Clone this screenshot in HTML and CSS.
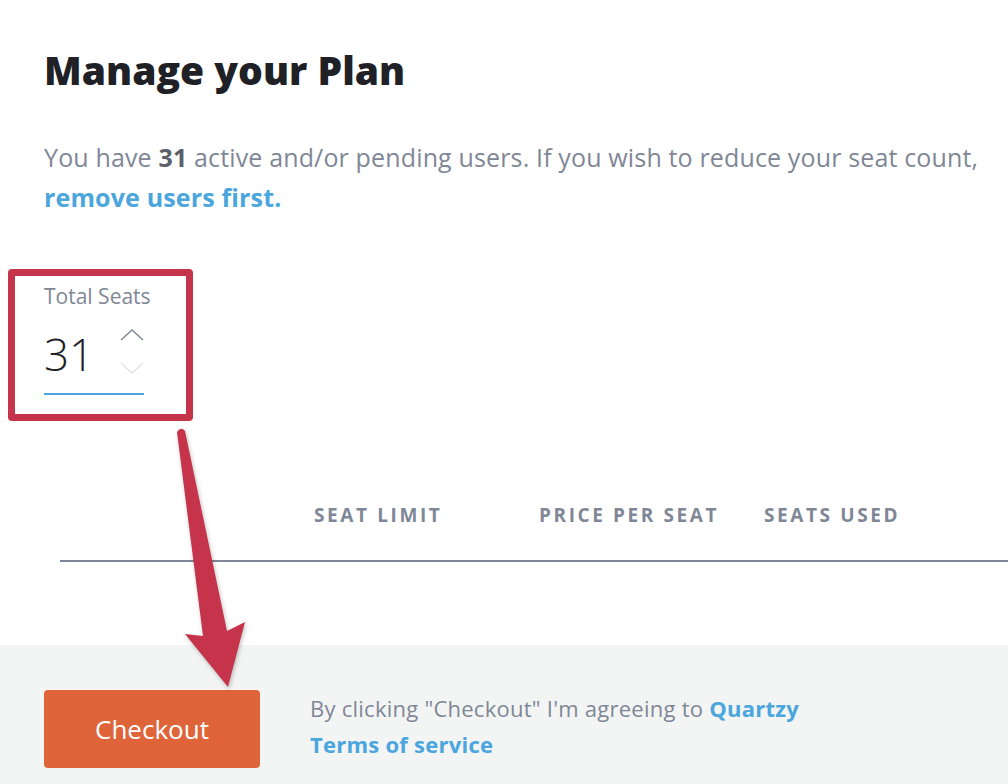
FILE: index.html
```html
<!DOCTYPE html>
<html lang="en">
<head>
    <meta charset="UTF-8">
    <meta name="viewport" content="width=device-width, initial-scale=1.0">
    <title>Manage your Plan</title>
    <link rel="stylesheet" href="styles.css">
</head>
<body>
    <main class="page">
        <section class="plan">
            <h1 class="plan-title">Manage your Plan</h1>
            <p class="plan-info">
                You have <strong>31</strong> active and/or pending users. If you wish to reduce your seat count,
                <a href="#" class="link">remove users first.</a>
            </p>

            <div class="seats">
                <label for="seats" class="seats-label">Total Seats</label>
                <div class="seats-input">
                    <span id="seats" class="seats-value">31</span>
                    <div class="seats-spinner">
                        <svg width="24" height="12" viewBox="0 0 24 12"><path d="M1 11 L12 1 L23 11" fill="none" stroke="#7f8796" stroke-width="1.4"/></svg>
                        <svg width="24" height="12" viewBox="0 0 24 12"><path d="M1 1 L12 11 L23 1" fill="none" stroke="#dfe2e6" stroke-width="1.4"/></svg>
                    </div>
                </div>
                <div class="highlight"></div>
            </div>

            <div class="plan-table">
                <span></span>
                <span class="col-head">Seat limit</span>
                <span class="col-head">Price per seat</span>
                <span class="col-head">Seats used</span>
            </div>
        </section>

        <footer class="checkout">
            <button class="checkout-btn">Checkout</button>
            <p class="terms">
                By clicking "Checkout" I'm agreeing to <a href="#" class="link">Quartzy Terms of service</a>
            </p>
        </footer>

        <!-- annotation arrow -->
        <svg class="arrow" width="1008" height="784" viewBox="0 0 1008 784">
            <path d="M177 432 Q181 426 185 431 L227 631 L245 622 L228 687 L185 634 L203 636 Z" fill="#c5344a"/>
        </svg>
    </main>
</body>
</html>
```

FILE: styles.css
```css
* {
    margin: 0;
    padding: 0;
    box-sizing: border-box;
    font-family: "Open Sans", "Lato", sans-serif;
}

:root {
    --text-dark: #1f2127;
    --text-grey: #7f8796;
    --link: #4aa6dc;
    --annot: #c5344a;
    --orange: #e0643a;
    --footer-bg: #f3f4f4;
}

body {
    background-color: #fff;
    width: 1008px;
    height: 784px;
    overflow: hidden;
}

.page {
    position: relative;
    height: 784px;
    display: flex;
    flex-direction: column;
}

.plan {
    padding: 45px 0 0 44px;
    flex: 1;
}

.plan-title {
    font-size: 39px;
    font-weight: 800;
    line-height: 50px;
    color: var(--text-dark);
}

.plan-info {
    max-width: 950px;
    margin-top: 42px;
    font-size: 25px;
    line-height: 40px;
    letter-spacing: 0.15px;
    color: var(--text-grey);
}

.plan-info strong {
    color: #5b606b;
}

.link {
    color: var(--link);
    font-weight: 700;
    text-decoration: none;
}

.seats {
    position: relative;
    margin-top: 66px;
    width: 100px;
}

.seats-label {
    display: block;
    white-space: nowrap;
    font-size: 21px;
    line-height: 26px;
    color: var(--text-grey);
}

.seats-input {
    display: flex;
    align-items: center;
    justify-content: space-between;
    height: 86px;
    border-bottom: 2px solid var(--link);
}

.seats-value {
    margin-top: 6px;
    font-size: 44px;
    font-weight: 300;
    line-height: 44px;
    color: var(--text-dark);
}

.seats-spinner {
    display: flex;
    flex-direction: column;
    gap: 21px;
}

.highlight {
    position: absolute;
    left: -36px;
    top: -14px;
    width: 185px;
    height: 152px;
    border: 7px solid var(--annot);
    border-radius: 4px;
}

.plan-table {
    display: grid;
    grid-template-columns: 254px 225px 225px 1fr;
    margin: 108px 0 0 16px;
    padding-bottom: 33px;
    border-bottom: 2px solid var(--text-grey);
}

.col-head {
    font-size: 19px;
    font-weight: 700;
    line-height: 24px;
    letter-spacing: 2.6px;
    text-transform: uppercase;
    color: var(--text-grey);
}

.checkout {
    display: flex;
    align-items: flex-start;
    gap: 50px;
    height: 139px;
    padding: 45px 0 0 44px;
    background-color: var(--footer-bg);
}

.checkout-btn {
    width: 216px;
    height: 78px;
    border: none;
    border-radius: 4px;
    background-color: var(--orange);
    color: #fff;
    font-size: 26px;
    cursor: pointer;
}

.terms {
    width: 510px;
    font-size: 22px;
    line-height: 36px;
    letter-spacing: 0.25px;
    color: var(--text-grey);
}

.arrow {
    position: absolute;
    left: 0;
    top: 0;
    pointer-events: none;
    filter: drop-shadow(1px 2px 2px rgba(0, 0, 0, 0.25));
}
```
